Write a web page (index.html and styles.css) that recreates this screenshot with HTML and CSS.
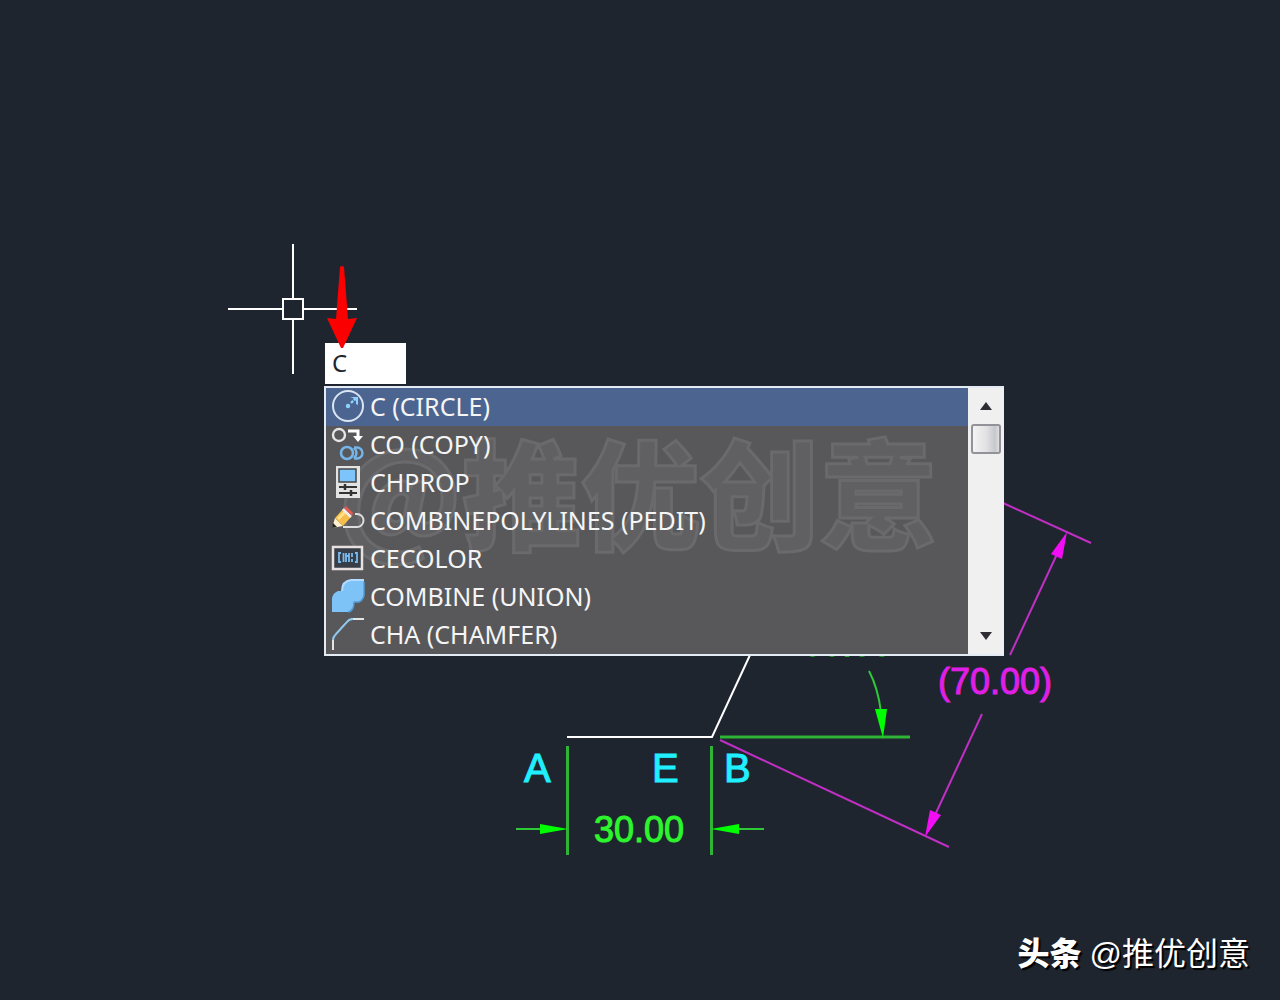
FILE: index.html
```html
<!DOCTYPE html>
<html lang="zh-CN">
<head>
  <meta charset="UTF-8" />
  <meta name="viewport" content="width=device-width, initial-scale=1.0" />
  <title>CAD</title>
  <link rel="stylesheet" href="styles.css">
</head>
<body>

  <main class="workspace">

    <!-- Drawing -->
    <svg class="drawing">
      <g class="outline">
        <path d="M567 737H712L750 655" />
      </g>

      <g class="dim-green">
        <path class="thick" d="M567.5 746V855M711.5 746V855M720 737H910" />
        <path d="M516 829H545M735 829H764" />
        <path d="M869 671Q878 688 881 712" />
        <path class="head" d="M540 824L568 829L540 834ZM739 824L711 829L739 834ZM875 709H887L883 738Z" />
        <text x="594" y="842">30.00</text>
        <text x="802" y="656">60.00</text>
      </g>

      <g class="dim-magenta">
        <path d="M1003 503L1091 543M720 740L949 847M1010 655L1058 552M982 714L935 815" />
        <path class="head" d="M1067 532L1051 554L1062 559ZM925 837L930 810L941 815Z" />
        <text x="938" y="694">(70.00)</text>
      </g>

      <g class="point-names">
        <text x="524" y="782">A</text>
        <text x="652" y="782">E</text>
        <text x="724" y="782">B</text>
      </g>

      <!-- Crosshair cursor -->
      <g class="outline">
        <path d="M293 244V298M293 319V374M228 309H282M303 309H357" />
        <rect x="283" y="299" width="20" height="20" />
      </g>
    </svg>

    <!-- Command input -->
    <div class="command">
      <input class="command-input" type="text" value="C" aria-label="Command" />

      <div class="suggestions">
        <div class="watermark">@推优创意</div>
        <ul class="command-list">
          <li><button class="command-item active" type="button">
            <svg class="icon" viewBox="0 0 34 34"><circle cx="17" cy="17" r="15" fill="none" stroke="#dbe5f2" stroke-width="2"/><circle cx="17" cy="17" r="2.2" fill="#8fd0ff"/><path d="M20 14L25 9" stroke="#8fd0ff" stroke-width="2.4" stroke-dasharray="3 1"/><path d="M19 8H27V16L25 15V12L22 9Z" fill="#8fd0ff"/></svg>
            C (CIRCLE)
          </button></li>
          <li><button class="command-item" type="button">
            <svg class="icon" viewBox="0 0 34 34"><circle cx="8" cy="8" r="6" fill="none" stroke="#e6e6e6" stroke-width="2.4"/><path d="M17 4H27V9" fill="none" stroke="#fff" stroke-width="3"/><path d="M22 9H32L27 15Z" fill="#fff"/><circle cx="16" cy="26" r="6" fill="none" stroke="#74b5ea" stroke-width="2.6"/><path d="M23 20.5H26A5.500 5.500 0 0 1 26 31.500H23M23 20.500Q28 26 23 31.500" fill="none" stroke="#74b5ea" stroke-width="2.4"/></svg>
            CO (COPY)
          </button></li>
          <li><button class="command-item" type="button">
            <svg class="icon" viewBox="0 0 34 34"><path d="M5 1H29V33H5Z" fill="#e3e3e3"/><path d="M8 4H25V17H8Z" fill="#7dc4fa" stroke="#454545" stroke-width="1.5"/><path d="M8 22H26M8 28H26" stroke="#333" stroke-width="2"/><path d="M14 19V25M20 25V31" stroke="#333" stroke-width="2.5"/></svg>
            CHPROP
          </button></li>
          <li><button class="command-item" type="button">
            <svg class="icon" viewBox="0 0 34 34"><path d="M12 24H26A6.500 6.500 0 0 0 26 11H24" fill="none" stroke="#dedede" stroke-width="2"/><path d="M1 25L4 15L12 23Z" fill="#fff0d0"/><path d="M1 25L2 20L6 24Z" fill="#222"/><path d="M4 15L12 6L20 14L12 23Z" fill="#f6bd4b"/><path d="M7 16L14 9" stroke="#ffe28a" stroke-width="3"/><path d="M11 7L13 5L21 13L19 15Z" fill="#eee"/><path d="M13 5L15 3L22 10L21 13Z" fill="#e65a50"/></svg>
            COMBINEPOLYLINES (PEDIT)
          </button></li>
          <li><button class="command-item" type="button">
            <svg class="icon" viewBox="0 0 34 34"><path d="M2 6H31V28H2Z" fill="#383e47" stroke="#e7e0df" stroke-width="2.5"/><path d="M10 12H8V21H10M24 12H26V21H24M12.500 12V21M15 12V21M15 15H18M18 12V21M21 12V16M21 18V21" fill="none" stroke="#79baf0" stroke-width="1.8"/></svg>
            CECOLOR
          </button></li>
          <li><button class="command-item" type="button">
            <svg class="icon" viewBox="0 0 34 34"><path d="M1 33V19Q2 14 7 12H11Q11 2 20 1H33V16Q32 21 28 23H23Q23 32 17 33Z" fill="#7ec3f8"/><path d="M11 12Q11 2 20 1H33" fill="none" stroke="#b3dcff" stroke-width="2"/><path d="M33 3V16Q32 21 28 23H23Q23 32 17 33" fill="none" stroke="#559cd6" stroke-width="1.5"/></svg>
            COMBINE (UNION)
          </button></li>
          <li><button class="command-item" type="button">
            <svg class="icon" viewBox="0 0 34 34"><path d="M2 33V23M20 2H33" fill="none" stroke="#e5e5e5" stroke-width="2"/><path d="M2 23Q2 20 5 17L16 5Q18 2 22 2" fill="none" stroke="#91c9ed" stroke-width="2"/></svg>
            CHA (CHAMFER)
          </button></li>
        </ul>

        <div class="scrollbar">
          <button class="scroll-btn" type="button" aria-label="Scroll up">
            <svg viewBox="0 0 14 8"><path d="M1 8L7 0L13 8Z" /></svg>
          </button>
          <div class="scroll-thumb"></div>
          <button class="scroll-btn scroll-down" type="button" aria-label="Scroll down">
            <svg viewBox="0 0 14 8"><path d="M1 0L7 8L13 0Z" /></svg>
          </button>
        </div>
      </div>
    </div>

    <!-- Red pointer -->
    <svg class="pointer" viewBox="0 0 30 82"><path d="M13 1Q15 -1 17 1L21 53L30 52L16 82H14L0 52L9 53Z" /></svg>

    <footer class="credit"><strong>头条</strong><span>@推优创意</span></footer>

  </main>

</body>
</html>
```
FILE: styles.css
```css
* {
  box-sizing: border-box;
}

body {
  margin: 0;
  background: #1f252f;
  font-family: "Noto Sans", "Noto Sans CJK SC", sans-serif;
}

.workspace {
  position: relative;
  min-height: 100vh;
  overflow: hidden;
}

/* drawing */
.drawing {
  position: absolute;
  inset: 0;
  width: 100%;
  height: 100%;
  font-family: "Liberation Sans", Arial, sans-serif;
  font-size: 36px;
}

.drawing path,
.drawing rect {
  fill: none;
  stroke-width: 2;
}

.outline {
  stroke: #fff;
}

.dim-green path {
  stroke: #2fc837;
}

.dim-green .thick {
  stroke: #2fb437;
  stroke-width: 3;
}

.dim-green text {
  fill: #2df52d;
  stroke: #2df52d;
}

.dim-magenta path {
  stroke: #bf2fc4;
}

.dim-magenta text {
  fill: #e01fe6;
  stroke: #e01fe6;
}

.drawing .dim-green .head {
  fill: #0f0;
  stroke: none;
}

.drawing .dim-magenta .head {
  fill: #f20df5;
  stroke: none;
}

.point-names {
  fill: #1fefff;
  stroke: #1fefff;
  font-size: 40px;
}

/* command box, floats next to the cursor */
.command {
  position: absolute;
  left: 324px;
  top: 343px;
  width: 680px;
}

.command-input {
  display: block;
  width: 82px;
  height: 41px;
  margin-bottom: 2px;
  padding: 0 7px 2px;
  border: 0;
  border-left: 1px solid #1f252f;
  background: #fff;
  color: #1f252f;
  font-family: inherit;
  font-size: 24px;
  outline: none;
}

.suggestions {
  position: relative;
  display: flex;
  border: 2px solid #e4ebf5;
  border-right: 0;
  background: #58585a;
}

.watermark {
  position: absolute;
  left: 12px;
  top: 42px;
  color: #606063;
  font-family: "Noto Sans CJK SC", sans-serif;
  font-size: 119px;
  font-weight: 900;
  line-height: 119px;
  white-space: nowrap;
  -webkit-text-stroke: 3px #6a6a6d;
}

.command-list {
  position: relative;
  flex: 1;
  margin: 0;
  padding: 0;
  list-style: none;
}

.command-item {
  display: flex;
  align-items: center;
  gap: 5px;
  width: 100%;
  height: 38px;
  padding: 0 5px 2px;
  border: 0;
  background: none;
  color: #f5f5f5;
  font-family: inherit;
  font-size: 25px;
  text-align: left;
}

.command-item.active {
  background: #4b6590;
}

.icon {
  width: 34px;
  height: 34px;
}

.scrollbar {
  position: relative;
  display: flex;
  flex-direction: column;
  align-items: center;
  width: 36px;
  background: #f0f0f1;
}

.scroll-btn {
  width: 36px;
  height: 36px;
  padding: 0 0 2px;
  border: 0;
  background: none;
  fill: #302c34;
}

.scroll-btn svg {
  width: 14px;
  height: 8px;
}

.scroll-thumb {
  width: 30px;
  height: 30px;
  border: 2px solid #929298;
  border-radius: 3px;
  background: linear-gradient(to right, #f3f3f4, #e2e2e4 50%, #c6c8cc 85%, #dedfe2);
}

.scroll-down {
  margin-top: auto;
}

.pointer {
  position: absolute;
  left: 327px;
  top: 266px;
  width: 30px;
  height: 82px;
  fill: #fb0000;
}

/* credit */
.credit {
  position: absolute;
  right: 30px;
  bottom: 26px;
  display: flex;
  gap: 8px;
  color: #fff;
  font-family: "Liberation Sans", "Noto Sans CJK SC", sans-serif;
  font-size: 32px;
  text-shadow: 2px 2px 1px #000;
}

.credit strong {
  font-weight: 900;
}
```
